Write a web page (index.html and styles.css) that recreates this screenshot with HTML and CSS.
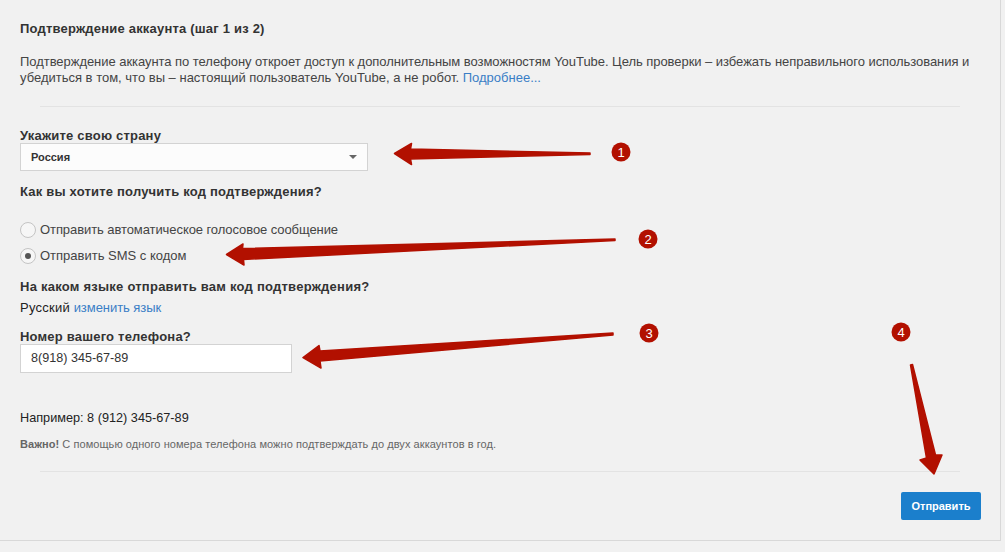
FILE: index.html
```html
<!DOCTYPE html>
<html lang="ru">
<head>
<meta charset="utf-8">
<title>Подтверждение аккаунта</title>
<link rel="stylesheet" href="styles.css">
</head>
<body>
<main class="panel">
  <h1 class="title">Подтверждение аккаунта (шаг 1 из 2)</h1>
  <p class="intro"><span class="intro-first">Подтверждение аккаунта по телефону откроет доступ к дополнительным возможностям YouTube. Цель проверки – избежать неправильного использования и</span><br>убедиться в том, что вы – настоящий пользователь YouTube, а не робот. <a class="link" href="#">Подробнее...</a></p>
  <hr class="rule rule-top">
  <form class="form">
    <div class="label label-country">Укажите свою страну</div>
    <div class="select"><span>Россия</span><i class="caret"></i></div>
    <div class="label label-how">Как вы хотите получить код подтверждения?</div>
    <div class="radio radio-first"><i class="dot"></i><span>Отправить автоматическое голосовое сообщение</span></div>
    <div class="radio radio-second"><i class="dot dot-on"></i><span>Отправить SMS с кодом</span></div>
    <div class="label label-lang">На каком языке отправить вам код подтверждения?</div>
    <div class="lang"><span class="lang-name">Русский</span> <a class="link lang-link" href="#">изменить язык</a></div>
    <div class="label label-phone">Номер вашего телефона?</div>
    <div class="phone">8(918) 345-67-89</div>
    <div class="example">Например: 8 (912) 345-67-89</div>
    <div class="note"><b>Важно!</b> С помощью одного номера телефона можно подтверждать до двух аккаунтов в год.</div>
  </form>
  <hr class="rule rule-bottom">
  <div class="actions"><span class="button">Отправить</span></div>
</main>
<svg class="overlay" width="1005" height="552" viewBox="0 0 1005 552" aria-hidden="true">
  <g fill="#b21000" stroke="#b21000" stroke-width="1.5" stroke-linejoin="round">
    <path d="M394.500 153.500 L411.500 143.500 L410.500 149 L590 153 L590 154.500 L410.500 159 L411.500 164.500 Z"/>
    <path d="M226.500 254.500 L243 244 L242.500 248.500 L615 239 L615 240.500 L243.500 259.500 L244 265 Z"/>
    <path d="M303 357.500 L319 345.500 L320 351 L613 333 L613 335 L320 361 L321 368 Z"/>
    <path d="M910.500 365 L912.500 364.500 L935.500 455 L942 455 L934 474 L920 460 L926.500 458 Z"/>
  </g>
  <g fill="#b21000">
    <circle cx="621" cy="152" r="9.500"/>
    <circle cx="648" cy="239" r="9.500"/>
    <circle cx="649" cy="333" r="9.500"/>
    <circle cx="901" cy="332" r="9.500"/>
  </g>
  <g class="num" text-anchor="middle">
    <text x="621" y="156.500">1</text>
    <text x="648" y="243.500">2</text>
    <text x="649" y="337.500">3</text>
    <text x="901" y="336.500">4</text>
  </g>
</svg>
</body>
</html>
```
FILE: styles.css
```css
* { box-sizing: border-box; }
html, body { margin: 0; height: 552px; overflow: hidden; background: #f1f1f1; }
body { font-family: "Liberation Sans", Arial, sans-serif; font-size: 13px; color: #333; }
.panel {
  width: 1002px; height: 541px;
  padding: 21px 19px 0 20px;
  border-right: 1px solid #d8d8d8;
  border-bottom: 1px solid #d8d8d8;
  border-left: 1px solid #e4e4e4;
  margin-left: -1px;
}
.title { margin: 0; font-size: 13px; letter-spacing: .2px; line-height: 16px; font-weight: bold; color: #333; }
.intro { margin: 17px 0 0; font-size: 13px; line-height: 16px; color: #444; white-space: nowrap; }
.intro-first { letter-spacing: -.045px; }
.link { color: #3a7ec6; text-decoration: none; }
.rule { border: 0; height: 1px; background: #e3e3e3; margin: 0 21px 0 20px; }
.rule-top { margin-top: 20px; }
.form { display: flex; flex-direction: column; align-items: flex-start; }
.label { font-size: 13px; font-weight: bold; line-height: 16px; color: #333; letter-spacing: .2px; }
.label-country { margin-top: 21px; }
.select {
  width: 348px; height: 28px; margin-top: -1px;
  display: flex; align-items: center; justify-content: space-between;
  padding: 0 10px;
  background: #fcfcfc; border: 1px solid #d3d3d3;
  font-size: 11px; font-weight: bold; color: #333;
}
.caret { width: 0; height: 0; border: 4px solid transparent; border-top: 4px solid #666; border-bottom: 0; }
.label-how { margin-top: 13px; }
.radio { display: flex; align-items: center; gap: 4px; font-size: 13px; line-height: 16px; color: #444; }
.radio-first { margin-top: 22px; letter-spacing: -.08px; }
.radio-second { margin-top: 10px; }
.dot { width: 16px; height: 16px; border-radius: 50%; border: 1px solid #c4c4c4; background: #f6f6f6; display: flex; align-items: center; justify-content: center; }
.dot-on::after { content: ""; width: 6px; height: 6px; border-radius: 50%; background: #555; }
.label-lang { margin-top: 15px; letter-spacing: .24px; }
.lang { margin-top: 5px; font-size: 13px; line-height: 16px; color: #222; }
.lang-name { letter-spacing: .25px; }
.lang-link { letter-spacing: -.05px; }
.label-phone { margin-top: 13px; }
.phone {
  width: 272px; height: 29px; line-height: 27px; padding: 0 10px; margin-top: -1px;
  background: #fff; border: 1px solid #d3d3d3; font-size: 12.600px; color: #333;
}
.example { margin-top: 37px; font-size: 12.700px; line-height: 16px; color: #222; }
.note { margin-top: 11px; font-size: 11px; letter-spacing: .06px; line-height: 14px; color: #666; }
.rule-bottom { margin-top: 20px; }
.actions { display: flex; justify-content: flex-end; margin-top: 20px; }
.button {
  width: 80px; height: 28px; line-height: 28px; text-align: center;
  background: #1b7fcc; border-radius: 2px; color: #fff; font-size: 11px; font-weight: bold;
}
.overlay { position: absolute; left: 0; top: 0; }
.num { font: 13px "Liberation Sans", Arial, sans-serif; fill: #fff; }
```
